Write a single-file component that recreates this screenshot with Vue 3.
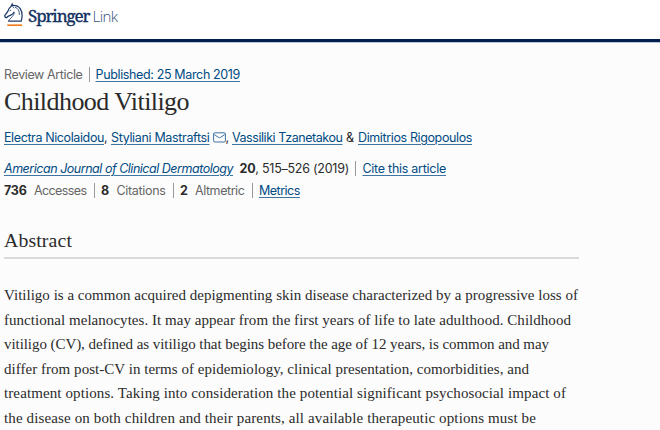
<template>
  <div class="page">
    <header class="header">
      <svg class="horse" width="20" height="28" viewBox="0 0 20 28" fill="none" stroke="#1c3a69">
        <path d="M4.2 21.1H17.2Q19.4 13.5 16.2 8.6Q13.6 5.2 8.6 5.5L8.1 4.2L7 6.6Q4.9 8 3.7 11.6L.9 15.3Q.3 17.2 2.4 17.7L4 16.4L6.8 15.2Q9.3 14.3 10.1 11.9" stroke-width="1.25" />
        <path d="M10.1 11.9Q10.6 14.6 8.3 16.6L4.2 21.1M11 7.2Q15.8 8.8 15.3 15M5.6 10.8L7.1 10.1M8.6 6.1L10 8.2" stroke-width=".8" />
        <path d="M3.3 25.2H18.1" stroke="#f07d22" stroke-width="1.7" />
      </svg>
      <span v-fit="61.5" class="springer">Springer</span>
      <span v-fit="25" class="link">Link</span>
    </header>

    <main class="article">
      <div class="row kind">
        <span v-fit="78.5" class="grey">Review Article</span>
        <i class="sep"></i>
        <a v-fit="144.5">Published: 25 March 2019</a>
      </div>

      <h1><span v-fit="185">Childhood Vitiligo</span></h1>

      <div class="row authors">
        <a v-fit="100">Electra Nicolaidou</a><span class="comma">,</span>
        <a v-fit="98.5">Styliani Mastraftsi</a>
        <svg class="mail" width="13" height="11" viewBox="0 0 13 11" fill="none" stroke="#3b719e">
          <rect x=".6" y=".8" width="11.8" height="9.2" rx="1.2" />
          <path d="M1.3 2.6L5.5 5.4Q6.5 6 7.5 5.4L11.7 2.6" />
        </svg><span class="comma">,</span>
        <a v-fit="110.5">Vassiliki Tzanetakou</a>
        <span class="amp">&amp;</span>
        <a v-fit="114">Dimitrios Rigopoulos</a>
      </div>

      <div class="row journal">
        <a v-fit="229"><em>American Journal of Clinical Dermatology</em></a>
        <span v-fit="109.5" class="issue"><b>20</b>, 515–526 (2019)</span>
        <i class="sep"></i>
        <a v-fit="83.5">Cite this article</a>
      </div>

      <div class="row metrics">
        <template v-for="m in metrics" :key="m.label">
          <b v-fit="m.countWidth">{{ m.count }}</b>
          <span v-fit="m.labelWidth" class="grey label">{{ m.label }}</span>
          <i class="sep"></i>
        </template>
        <a v-fit="41">Metrics</a>
      </div>

      <h2><span v-fit="68">Abstract</span></h2>

      <p class="abstract">
        <span v-for="line in abstract" :key="line.text" v-fit="line.width">{{ line.text }}</span>
      </p>
    </main>
  </div>
</template>

<script setup>
const metrics = [
  { count: '736', label: 'Accesses', countWidth: 22.5, labelWidth: 52.5 },
  { count: '8', label: 'Citations', countWidth: 8, labelWidth: 49 },
  { count: '2', label: 'Altmetric', countWidth: 7.5, labelWidth: 49.4 },
]

const abstract = [
  { width: 574, text: 'Vitiligo is a common acquired depigmenting skin disease characterized by a progressive loss of' },
  { width: 567, text: 'functional melanocytes. It may appear from the first years of life to late adulthood. Childhood' },
  { width: 545, text: 'vitiligo (CV), defined as vitiligo that begins before the age of 12 years, is common and may' },
  { width: 525, text: 'differ from post-CV in terms of epidemiology, clinical presentation, comorbidities, and' },
  { width: 562, text: 'treatment options. Taking into consideration the potential significant psychosocial impact of' },
  { width: 532, text: 'the disease on both children and their parents, all available therapeutic options must be' },
]

// Track the text so that it takes the given measure
const vFit = {
  mounted(el, { value }) {
    const natural = el.getBoundingClientRect().width
    el.style.letterSpacing = (value - natural) / el.textContent.length + 'px'
  },
}
</script>

<style>
body {
  background: #fcfcfc;
}
</style>

<style scoped>
.page {
  height: 430px;
  overflow: hidden;
  color: #2b2b2b;
  font-family: Inter, "Liberation Sans", sans-serif;
  font-size: 12.5px;
  white-space: nowrap;
}

.header {
  display: flex;
  box-sizing: border-box;
  height: 42px;
  padding-left: 4px;
  background: #fff;
  border-bottom: 3px solid #01204f;
  box-shadow: 0 1px 0 #b9c5d6;
  color: #12305f;
  line-height: 32px;
}
.horse {
  flex: none;
  margin-right: 4px;
}
.springer {
  font-family: "Noto Serif", "Liberation Serif", serif;
  font-size: 17px;
  -webkit-text-stroke: .35px #12305f;
}
.link {
  margin-left: 3px;
  color: #34507a;
  font-family: "Open Sans", sans-serif;
  font-size: 15px;
  font-weight: 300;
}

.article {
  padding-left: 4px;
}

.row {
  display: flex;
  align-items: center;
  height: 20px;
}
.row > * {
  flex: none;
}
a {
  color: #004b83;
  text-decoration: underline;
  text-decoration-color: #3f75a3;
  text-decoration-thickness: 1px;
  text-underline-offset: 2px;
}
.grey {
  color: #666;
}
.sep {
  width: 1px;
  height: 15px;
  margin: 0 6px;
  background: #999;
}

.kind {
  margin-top: 22px;
}
h1,
h2 {
  margin: 0;
  font-family: Georgia, "Liberation Serif", serif;
  font-weight: 400;
}
h1 {
  height: 32px;
  margin-top: 2px;
  font-size: 26px;
  line-height: 32px;
}
.authors {
  margin-top: 9px;
}
.comma {
  width: 7px;
}
.mail {
  margin-left: 3px;
}
.mail + .comma {
  width: 6.5px;
}
.amp {
  width: 12px;
  margin-left: 3.5px;
}
.journal {
  margin-top: 11px;
}
.issue {
  margin-left: 6.5px;
}
.journal .sep {
  margin-left: 6.5px;
}
.metrics {
  margin-top: 2px;
}
.label {
  margin-left: 7.5px;
}
.metrics .sep {
  margin-left: 7.5px;
}
b {
  font-weight: 700;
}

h2 {
  width: 575px;
  height: 29px;
  margin-top: 28px;
  border-bottom: 2px solid #dadada;
  font-size: 19.8px;
  line-height: 24px;
}

.abstract {
  display: flex;
  flex-direction: column;
  align-items: flex-start;
  margin: 24.3px 0 0;
  font-family: Georgia, "Liberation Serif", serif;
  font-size: 15px;
  line-height: 24.45px;
}
</style>
